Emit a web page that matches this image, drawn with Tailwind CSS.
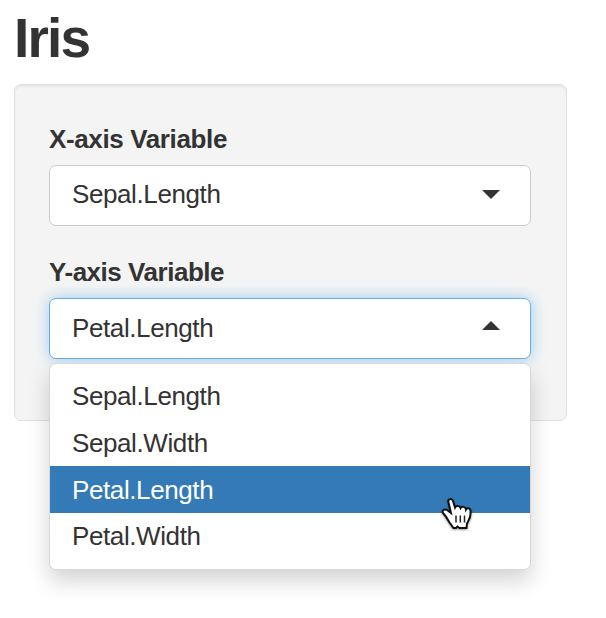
<!DOCTYPE html>
<html lang="en">
<head>
<meta charset="utf-8">
<title>Iris</title>
<script src="https://cdn.jsdelivr.net/npm/@tailwindcss/browser@4"></script>
</head>
<body class="h-[618px] overflow-hidden bg-white pl-[14px] pt-[7px] font-['Liberation_Sans',Arial,sans-serif] text-[26px] leading-[36px] tracking-[-0.4px] text-[#333]">
<h1 class="mb-[15px] h-[62px] text-[55px] font-bold leading-[62px] tracking-[-1.8px]">Iris</h1>
<main class="h-[337px] w-[553px] rounded-[7px] border border-[#e0e0e0] bg-[#f4f4f4] px-[34px] pt-[36px] shadow-[inset_0_2px_2px_rgba(0,0,0,0.05)]">
  <label class="block h-[44px] font-bold tracking-[-0.37px]">X-axis Variable</label>
  <div class="flex h-[61px] w-[482px] items-center justify-between rounded-[7px] border border-[#ccc] bg-white pb-[3px] pl-[22px] pr-[30px]">
    <span>Sepal.Length</span>
    <svg class="mt-[1px] h-[9px] w-[18px]" viewBox="0 0 18 9" fill="#333"><path d="M0 0H18L9 9Z"/></svg>
  </div>
  <label class="mt-[28px] block h-[44px] font-bold tracking-[-0.47px]">Y-axis Variable</label>
  <div class="relative">
    <div class="flex h-[61px] w-[482px] items-center justify-between rounded-[7px] border border-[#66afe9] bg-white pb-[1px] pl-[22px] pr-[30px] shadow-[0_0_15px_rgba(102,175,233,0.6)]">
      <span>Petal.Length</span>
      <svg class="mb-[6px] h-[9px] w-[18px]" viewBox="0 0 18 9" fill="#333"><path d="M0 9H18L9 0Z"/></svg>
    </div>
    <ul class="absolute left-0 top-[65px] h-[207px] w-[482px] rounded-[7px] border border-[#d8d8d8] bg-white pt-[9px] leading-[46px] shadow-[0_11px_22px_rgba(0,0,0,0.175)]">
      <li class="h-[46px] pl-[22px]">Sepal.Length</li>
      <li class="h-[47px] pl-[22px] leading-[48px]">Sepal.Width</li>
      <li class="h-[47px] bg-[#337ab7] pl-[22px] leading-[48px] text-white">Petal.Length</li>
      <li class="h-[46px] pl-[22px]">Petal.Width</li>
    </ul>
    <svg class="absolute left-[391px] top-[198px] h-[37px] w-[34px] drop-shadow-[0_1px_1px_rgba(0,0,0,0.4)]" viewBox="0 0 34 37" fill="none">
      <path d="M10.500 3C8.500 3 8 4.500 8.500 6.500L11 17L7 14C4.500 12.500 1.500 14.500 3 17C6 20 8 24 9.500 26.500L13.500 32H16L17.500 30.500L19.500 32H26.500L27 27.500C28.500 24.500 30.500 22 30.500 18V15C30.500 12 27 11.500 26 13.500C25.500 10.500 21.500 10 20.500 12C19.500 9.500 16 9.500 15 11.500L13 5C12.500 3.500 11.500 3 10.500 3Z" fill="#fff" stroke="#111" stroke-width="2"/>
      <path d="M16 19.500V26.500M20.300 19.500V26.500M24.500 19.500V26.500" stroke="#222" stroke-width="1.500"/>
    </svg>
  </div>
</main>
</body>
</html>
